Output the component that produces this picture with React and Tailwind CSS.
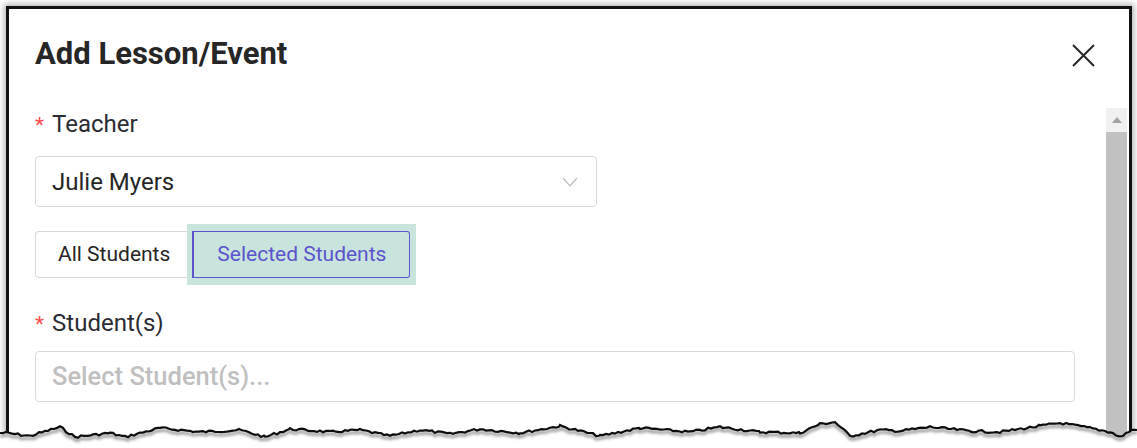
import { useMemo } from 'react';

// anchor points of the torn bottom edge (page coords)
const anchors = [
  [0, 433], [6, 433], [30, 436], [60, 427], [75, 437], [110, 433], [125, 437], [160, 428], [200, 432],
  [240, 430], [265, 437], [290, 429], [330, 432], [360, 430], [390, 436], [420, 430], [450, 434],
  [480, 429], [520, 433], [560, 426], [600, 436], [640, 428], [690, 432], [720, 427], [760, 432],
  [800, 433], [820, 424], [835, 422], [850, 436], [880, 430], [900, 431], [930, 427], [970, 431],
  [1000, 432], [1040, 426], [1060, 423], [1090, 428], [1110, 432], [1120, 437], [1132, 430], [1137, 430],
];

function tornPoints() {
  let seed = 7;
  const rnd = () => {
    seed = (seed * 9301 + 49297) % 233280;
    return seed / 233280;
  };
  const pts = [];
  for (let i = 0; i < anchors.length - 1; i++) {
    const [x0, y0] = anchors[i];
    const [x1, y1] = anchors[i + 1];
    for (let x = x0; x < x1; x += 3) {
      const t = (x - x0) / (x1 - x0);
      const y = y0 + (y1 - y0) * t + (rnd() - 0.5) * 2.5;
      pts.push([x, y - 405]);
    }
  }
  pts.push([1137, 430 - 405]);
  return pts;
}

function TornEdge() {
  const pts = useMemo(tornPoints, []);
  const line = pts.map(([x, y]) => `${x},${y.toFixed(1)}`).join(' ');
  const fill = `0,43 ${line} 1137,43`;
  return (
    <svg className="absolute left-0 top-[405px]" width="1137" height="43" viewBox="0 0 1137 43">
      <defs>
        <filter id="tear" x="-5%" y="-50%" width="110%" height="200%">
          <feDropShadow dx="0" dy="3" stdDeviation="1.8" floodColor="#000" floodOpacity="0.5" />
        </filter>
      </defs>
      <polygon points={fill} fill="#fff" />
      <polyline points={line} fill="none" stroke="#111" strokeWidth="2.2" filter="url(#tear)" />
    </svg>
  );
}

function Label({ children }) {
  return (
    <div className="flex items-baseline text-[24px] leading-[32px] text-[#2b2b33]">
      <span className="mr-[8px] text-[21px] text-[#ff4d4f]">*</span>
      {children}
    </div>
  );
}

export default function App() {
  return (
    <div className="relative h-[448px] w-[1137px] overflow-hidden bg-white pl-[6px] pr-[5px] pt-[6px] font-['Roboto',sans-serif]">
      <div className="flex h-[460px] flex-col border-[3px] border-b-0 border-[#111] bg-white shadow-[0_0_6px_2px_rgba(0,0,0,0.3)]">
        <div className="flex h-[99px] shrink-0 items-start justify-between pl-[26px] pr-[34px] pt-[27px]">
          <h2 className="text-[31px] font-bold leading-[36px] text-[#262626]">Add Lesson/Event</h2>
          <svg className="mt-[8px]" width="23" height="23" viewBox="0 0 23 23">
            <path d="M1 1 L22 22 M22 1 L1 22" stroke="#262626" strokeWidth="2" fill="none" />
          </svg>
        </div>

        <div className="flex flex-1">
          <div className="flex-1 pl-[26px] pr-[31px]">
            <Label>Teacher</Label>
            <div className="mt-[15px] flex h-[51px] w-[562px] items-center justify-between rounded-[4px] border border-[#d9d9d9] pl-[16px] pr-[18px]">
              <span className="text-[24px] text-[#262626]">Julie Myers</span>
              <svg width="16" height="10" viewBox="0 0 16 10">
                <polyline points="1,1 8,9 15,1" fill="none" stroke="#bfbfbf" strokeWidth="1.2" />
              </svg>
            </div>

            <div className="mt-[17px] flex h-[61px] items-center">
              <div className="flex h-[47px] items-center rounded-l-[4px] border border-r-0 border-[#d9d9d9] pl-[22px] pr-[21px] text-[21px] text-[#262626]">
                All Students
              </div>
              <div className="-ml-[4px] flex h-[61px] items-center bg-[#c9e3dd] pl-[5px] pr-[6px]">
                <div className="flex h-[47px] items-center rounded-r-[3px] border border-l-2 border-[#5b54cc] pl-[23px] pr-[23px] text-[21px] text-[#5b54cc]">
                  Selected Students
                </div>
              </div>
            </div>

            <div className="mt-[22px]">
              <Label>Student(s)</Label>
            </div>
            <div className="mt-[11px] flex h-[51px] items-center rounded-[4px] border border-[#d9d9d9] pl-[16px]">
              <span className="text-[25.5px] font-medium text-[#bfbfbf]">Select Student(s)...</span>
            </div>
          </div>

          <div className="mr-[2px] flex w-[21px] flex-col">
            <div className="flex h-[24px] items-center justify-center bg-[#f1f1f1]">
              <svg width="10" height="6" viewBox="0 0 10 6">
                <polygon points="0,6 5,0 10,6" fill="#a3a3a3" />
              </svg>
            </div>
            <div className="flex-1 bg-[#c1c1c1]" />
          </div>
        </div>
      </div>
      <TornEdge />
    </div>
  );
}
